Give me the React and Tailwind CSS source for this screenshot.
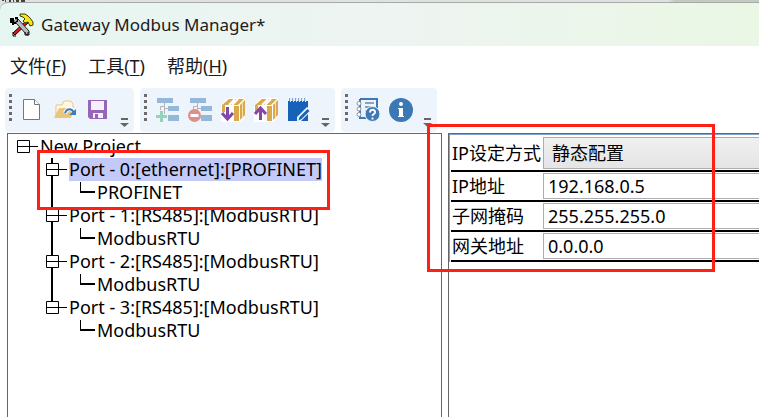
import React from "react";

const textFont = "font-['Noto_Sans','Noto_Sans_CJK_SC',sans-serif]";

function AppLogo() {
  return (
    <svg viewBox="0 0 24 24" className="h-6 w-6" aria-hidden="true">
      <path d="m3 20 2 2L19 9l-2-2z" fill="#e8141c" stroke="#000" strokeWidth="1" />
      <path d="M3 19v4h3" fill="none" stroke="#000" strokeWidth="1" />
      <path d="m6 8 2-2 11 12v4h-2L6 10z" fill="#b9bcc0" stroke="#222" strokeWidth="1" />
      <path d="M0 5h4v2h1V4h3v5H6v2H4v1H2v-2H0z" fill="#000" />
      <path d="M6 6v2H4" fill="none" stroke="#fff" strokeWidth="1" />
      <path d="M10 3V1h5l3 2 2 2 3 4v3l-3 1-2-4-3 1-2-2 2-2-2-2z" fill="#f5e614" stroke="#3a3a10" strokeWidth="1" />
      <path d="M15 19v3h3v-3" fill="none" stroke="#000" strokeWidth="1" />
    </svg>
  );
}

function NewIcon() {
  return (
    <svg viewBox="0 0 24 24" className="h-6 w-6" aria-hidden="true">
      <path d="M3.500 1.500h11l5 5v15h-16z" fill="#fff" stroke="#777" strokeWidth="1" />
      <path d="M14.500 1.500v5h5" fill="#fff" stroke="#777" strokeWidth="1" />
    </svg>
  );
}

function OpenIcon() {
  return (
    <svg viewBox="0 0 24 24" className="h-6 w-6" aria-hidden="true">
      <path d="M3 19V7h6l2-4h7l2 3v5" fill="#fff8e8" stroke="#ecc57c" strokeWidth="1" />
      <path d="M1 20 6 10h15l-3 10z" fill="#ecc57c" />
      <path d="M12 15c2-5 7-5 9-1" fill="none" stroke="#fff" strokeWidth="4" />
      <path d="M12 15c2-5 7-5 9 0" fill="none" stroke="#3d7cba" strokeWidth="2" />
      <path d="M23 11v6h-7z" fill="#3d7cba" />
    </svg>
  );
}

function SaveIcon() {
  return (
    <svg viewBox="0 0 24 24" className="h-6 w-6" aria-hidden="true">
      <path d="M2 2h19v19H4l-2-2z" fill="#9566b8" />
      <path d="M5 3h13v9H5z" fill="#f4effa" />
      <path d="M7 15h10v5H7z" fill="#f4effa" />
      <path d="M9 16h3v4H9z" fill="#9566b8" />
    </svg>
  );
}

function NetworkShape() {
  return (
    <>
      <path d="M2 0h16v5H2z" fill="#93b8dc" />
      <path d="M13 8h11v5H13zM13 17h11v6H13z" fill="#93b8dc" />
      <path d="M9.500 5v3.500h-4V12M9.500 8.500v2H13M9.500 10.500v9H13" fill="none" stroke="#b4b4b4" strokeWidth="1" />
    </>
  );
}

function AddNodeIcon() {
  return (
    <svg viewBox="0 0 24 24" className="h-6 w-6" aria-hidden="true">
      <NetworkShape />
      <path d="M6.500 12v12M0 18.500h13" stroke="#eef4fc" strokeWidth="5" />
      <path d="M6.500 13v11M1 18.500h11" stroke="#93d2bb" strokeWidth="3" />
    </svg>
  );
}

function RemoveNodeIcon() {
  return (
    <svg viewBox="0 0 24 24" className="h-6 w-6" aria-hidden="true">
      <NetworkShape />
      <circle cx="6.500" cy="17.500" r="6.500" fill="#df8f89" />
      <path d="M2.500 17.500h8" stroke="#fff" strokeWidth="3" />
    </svg>
  );
}

function BoxShape() {
  return (
    <>
      <path d="M0 7 7 0h17v19l-5 5H0z" fill="#fff" />
      <path d="M1 7 8 1h15l-6 6z" fill="#d9a94c" />
      <path d="m8 7 6-6M11 7l6-6" stroke="#fff" strokeWidth="2" />
      <path d="M1 7h3v7H1zM13 8h5v15h-5z" fill="#d9a94c" />
      <path d="m19 7 5-5v15l-5 5z" fill="#d9a94c" />
      <path d="M21.500 5v14" stroke="#f5dfaa" strokeWidth="1" />
    </>
  );
}

function DownloadIcon() {
  return (
    <svg viewBox="0 0 24 24" className="h-6 w-6" aria-hidden="true">
      <BoxShape />
      <path d="M6.500 9v12M1 15l5.500 6 5.500-6" fill="none" stroke="#8446a8" strokeWidth="3" />
    </svg>
  );
}

function UploadIcon() {
  return (
    <svg viewBox="0 0 24 24" className="h-6 w-6" aria-hidden="true">
      <BoxShape />
      <path d="M6.500 22V10M1 16l5.500-6 5.500 6" fill="none" stroke="#8446a8" strokeWidth="3" />
    </svg>
  );
}

function NoteIcon() {
  return (
    <svg viewBox="0 0 24 24" className="h-6 w-6" aria-hidden="true">
      <path d="M1 3h20v20H1z" fill="#1762b8" />
      <path d="M3.500 0v4M6.500 0v4M9.500 0v4M12.500 0v4M15.500 0v4M18.500 0v4" stroke="#dce8f6" strokeWidth="1" />
      <path d="M2.500 0v3M5.500 0v3M8.500 0v3M11.500 0v3M14.500 0v3M17.500 0v3" stroke="#7ba4d4" strokeWidth="1" />
      <path d="M10 24v-5l10-10 4 3v1L13 24z" fill="#eef4fc" />
      <path d="m11.500 22.500 1-3.500 8-8 2 2-8 8z" fill="#1762b8" />
    </svg>
  );
}

function HelpListIcon() {
  return (
    <svg viewBox="0 0 24 24" className="h-6 w-6" aria-hidden="true">
      <path d="M4 1h17v9M4 1v19h8" fill="none" stroke="#3f79b5" strokeWidth="2" />
      <path d="M9 5h9M9 9h6M9 13h3" stroke="#8ba3bd" strokeWidth="2" />
      <circle cx="3" cy="5.500" r="2" fill="#fff" stroke="#8a94a0" />
      <circle cx="3" cy="11" r="2" fill="#fff" stroke="#8a94a0" />
      <circle cx="3" cy="16.500" r="2" fill="#fff" stroke="#8a94a0" />
      <circle cx="16.500" cy="16" r="7.500" fill="#3f79b5" stroke="#eef4fc" />
      <path d="M14 14.500c0-4 5.500-3.500 5 0-.3 1.700-2.500 1.400-2.500 3.500M16.500 19.500v2" fill="none" stroke="#fff" strokeWidth="2" />
    </svg>
  );
}

function InfoIcon() {
  return (
    <svg viewBox="0 0 24 24" className="h-6 w-6" aria-hidden="true">
      <circle cx="12" cy="12" r="12" fill="#3c78b4" />
      <circle cx="12" cy="6" r="2" fill="#fff" />
      <path d="M9 10h5v8h1v1H9v-1h1v-7H9z" fill="#fff" />
    </svg>
  );
}

const toolGroups = [
  [
    ["新建", NewIcon],
    ["打开", OpenIcon],
    ["保存", SaveIcon],
  ],
  [
    ["添加节点", AddNodeIcon],
    ["删除节点", RemoveNodeIcon],
    ["下载", DownloadIcon],
    ["上传", UploadIcon],
    ["编辑", NoteIcon],
  ],
  [
    ["帮助", HelpListIcon],
    ["关于", InfoIcon],
  ],
];

function ToolGroup({ tools }) {
  return (
    <div role="toolbar" className="flex h-11 rounded bg-[#eef4fc] pl-1">
      <div className="flex w-1.5 flex-col gap-[3px] pt-1.5">
        {[0, 1, 2, 3, 4].map((dot) => (
          <span key={dot} className="h-[3px] w-[3px] bg-[#6c6c6c]" />
        ))}
      </div>
      {tools.map(([name, Icon]) => (
        <button key={name} type="button" aria-label={name} className="flex w-[33px] items-center justify-center">
          <Icon />
        </button>
      ))}
      <button type="button" aria-label="更多" className="flex w-5 items-end justify-center pb-1">
        <svg viewBox="0 0 9 10" className="h-2.5 w-[9px]" aria-hidden="true">
          <path d="M1 0h7v2H1zM0 5h9L4.500 9z" fill="#666" />
        </svg>
      </button>
    </div>
  );
}

const menus = [
  ["文件", "F"],
  ["工具", "T"],
  ["帮助", "H"],
];

const ports = [
  { name: "Port - 0:[ethernet]:[PROFINET]", child: "PROFINET", selected: true },
  { name: "Port - 1:[RS485]:[ModbusRTU]", child: "ModbusRTU" },
  { name: "Port - 2:[RS485]:[ModbusRTU]", child: "ModbusRTU" },
  { name: "Port - 3:[RS485]:[ModbusRTU]", child: "ModbusRTU" },
];

function RootToggle() {
  return (
    <svg viewBox="0 0 23 23" className="h-[23px] w-[23px] shrink-0" aria-hidden="true">
      <path d="M.5 5.500h12v12H.5zM0 11.500h21" fill="none" stroke="#000" strokeWidth="1" />
    </svg>
  );
}

function PortToggle({ last }) {
  return (
    <svg viewBox="0 0 23 23" className="h-[23px] w-[23px] shrink-0" aria-hidden="true">
      <path d={last ? "M6 0v5" : "M6 0v5M6 18v5"} stroke="#000" strokeWidth="2" />
      <path d="M.5 5.500h12v12H.5z" fill="none" stroke="#000" strokeWidth="1" />
      <path d="M0 11.500h21" stroke="#000" strokeWidth="1" />
    </svg>
  );
}

function LeafLine({ last }) {
  return (
    <svg viewBox="0 0 51 23" className="h-[23px] w-[51px] shrink-0" aria-hidden="true">
      {!last && <path d="M6 0v23" stroke="#000" strokeWidth="2" />}
      <path d="M34.500 1v10" stroke="#000" strokeWidth="1" />
      <path d="M34 11h15" stroke="#000" strokeWidth="2" />
    </svg>
  );
}

function ProjectTree() {
  return (
    <ul className="pt-px pl-[9px] text-lg leading-[23px] text-black">
      <li>
        <button type="button" className="flex">
          <RootToggle />
          <span>New Project</span>
        </button>
        <ul className="pl-[29px]">
          {ports.map((port, index) => {
            const last = index === ports.length - 1;
            return (
              <li key={port.name}>
                <button type="button" className="flex">
                  <PortToggle last={last} />
                  <span className={port.selected ? "bg-[#c4caf8]" : ""}>{port.name}</span>
                </button>
                <ul>
                  <li>
                    <button type="button" className="flex">
                      <LeafLine last={last} />
                      <span>{port.child}</span>
                    </button>
                  </li>
                </ul>
              </li>
            );
          })}
        </ul>
      </li>
    </ul>
  );
}

const addresses = [
  ["ip", "IP地址", "192.168.0.5"],
  ["mask", "子网掩码", "255.255.255.0"],
  ["gateway", "网关地址", "0.0.0.0"],
];

function AddressForm() {
  return (
    <form className="border-t border-l border-[#7fa3cc] pt-px pl-px text-lg leading-6 text-black">
      <div className="flex h-9 items-center border-b-2 border-black">
        <label htmlFor="mode" className="w-[92px] shrink-0 pl-px whitespace-nowrap">IP设定方式</label>
        <select
          id="mode"
          defaultValue="static"
          className="h-8 min-w-0 flex-1 appearance-none border border-r-0 border-[#acacac] bg-gradient-to-b from-[#f0f0f0] to-[#e5e5e5] pl-2 outline-none"
        >
          <option value="static">静态配置</option>
        </select>
      </div>
      {addresses.map(([id, label, value]) => (
        <div key={id} className="flex h-[30px] items-center border-b-2 border-black">
          <label htmlFor={id} className="w-[92px] shrink-0 pl-px whitespace-nowrap">{label}</label>
          <input
            id={id}
            defaultValue={value}
            className="h-[26px] min-w-0 flex-1 border border-r-0 border-[#abadb3] bg-white pl-1 outline-none"
          />
        </div>
      ))}
    </form>
  );
}

export default function App() {
  return (
    <div className={`relative flex h-screen flex-col overflow-hidden bg-white ${textFont}`}>
      <div className="bg-gradient-to-r from-[#dfe2e1] from-88% to-[#c3cac0] to-89%">
        <svg viewBox="0 0 28 2" className="block h-0.5 w-7" aria-hidden="true">
          <path d="M2 0h2v1H2zM5 0h1v2H5zM9 0h2v2H9zM13 0h1v2h-1zM16 0h3v2h-3zM21 0h4v2h-4z" fill="#4a4438" />
        </svg>
        <header className="flex h-11 items-center gap-[7px] rounded-tl-lg border-t border-[#a5aaa7] bg-gradient-to-r from-[#e6f6f0] via-[#eef4f2] to-[#eaf7e4] pl-2.5">
          <AppLogo />
          <h1 className="text-[17px] text-[#1c1c1c]">Gateway Modbus Manager*</h1>
        </header>
      </div>
      <nav className="flex h-10 items-center gap-[22px] pl-2.5 text-lg text-[#1a1a1a]">
        {menus.map(([name, key]) => (
          <button key={key} type="button">
            {name}(<span className="underline underline-offset-2">{key}</span>)
          </button>
        ))}
      </nav>
      <div className="mt-0.5 flex gap-1.5 pl-[5px]">
        {toolGroups.map((tools, index) => (
          <ToolGroup key={index} tools={tools} />
        ))}
      </div>
      <main className="mt-px flex min-h-0 flex-1 gap-1.5 pl-[7px]">
        <section className="w-[435px] shrink-0 border border-b-0 border-[#666]">
          <ProjectTree />
        </section>
        <section className="min-w-0 flex-1 border-t border-l border-[#666]">
          <AddressForm />
        </section>
      </main>
      <div className="pointer-events-none absolute top-[150px] left-[37px] h-[60px] w-[293px] border-3 border-[#ff2015]" />
      <div className="pointer-events-none absolute top-[124px] left-[427px] h-[148px] w-[288px] border-3 border-[#ff2015]" />
    </div>
  );
}
